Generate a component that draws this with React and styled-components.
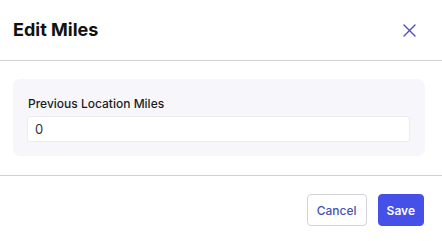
import React, { useState } from 'react'
import styled, { createGlobalStyle } from 'styled-components'

const GlobalStyle = createGlobalStyle`
  body {
    margin: 0;
    background: #ffffff;
    font-family: Inter, "Noto Sans", sans-serif;
  }
`;

const Modal = styled.div`
  width: 442px;
  height: 241px;
  background: #ffffff;
  display: flex;
  flex-direction: column;
`;

const Header = styled.div`
  display: flex;
  align-items: center;
  justify-content: space-between;
  padding: 0 26px 0 13px;
  border-bottom: 1px solid #cfcfd4;
  box-sizing: border-box;
  height: 61px;
`;

const Title = styled.h2`
  margin: 0;
  font-size: 18px;
  font-weight: 700;
  color: #111111;
  margin-top: -2px;
`;

const CloseButton = styled.button`
  border: none;
  background: none;
  padding: 0;
  display: flex;
  cursor: pointer;
  color: #4a50b8;
`;

const Body = styled.div`
  padding: 18px 17px 19px 13px;
  border-bottom: 1px solid #cfcfd4;
`;

const Panel = styled.div`
  background: #f7f7fb;
  border-radius: 7px;
  padding: 17px 15px 14px 14px;
  display: flex;
  flex-direction: column;
  gap: 5px;
`;

const Label = styled.label`
  font-size: 12px;
  font-weight: 500;
  color: #1c1c1c;
  padding-left: 1px;
`;

const Input = styled.input`
  height: 26px;
  box-sizing: border-box;
  border: 1px solid #ececf0;
  border-radius: 3px;
  background: #ffffff;
  padding: 0 7px;
  font-family: Inter, sans-serif;
  font-size: 13px;
  color: #333333;
  outline: none;
`;

const Footer = styled.div`
  display: flex;
  justify-content: flex-end;
  gap: 11px;
  padding: 18px 18px 0 0;
`;

const Button = styled.button`
  height: 32px;
  padding: 0 ${(p) => (p.$primary ? '8px' : '9px')};
  border-radius: 4px;
  font-family: Inter, sans-serif;
  font-size: 12px;
  font-weight: ${(p) => (p.$primary ? 600 : 500)};
  cursor: pointer;
  border: 1px solid ${(p) => (p.$primary ? '#4450e8' : '#d4d4d8')};
  background: ${(p) => (p.$primary ? '#4450e8' : '#ffffff')};
  color: ${(p) => (p.$primary ? '#ffffff' : '#4a50b8')};
`;

const App = () => {
  const [miles, setMiles] = useState('0')
  return (
    <Modal>
      <GlobalStyle />
      <Header>
        <Title>Edit Miles</Title>
        <CloseButton aria-label="Close">
          <svg width="13" height="13" viewBox="0 0 13 13" fill="none" stroke="currentColor" strokeWidth="1.4" strokeLinecap="round">
            <path d="M1 1 L12 12 M12 1 L1 12" />
          </svg>
        </CloseButton>
      </Header>
      <Body>
        <Panel>
          <Label>Previous Location Miles</Label>
          <Input value={miles} onChange={(e) => setMiles(e.target.value)} />
        </Panel>
      </Body>
      <Footer>
        <Button>Cancel</Button>
        <Button $primary>Save</Button>
      </Footer>
    </Modal>
  )
}

export default App
